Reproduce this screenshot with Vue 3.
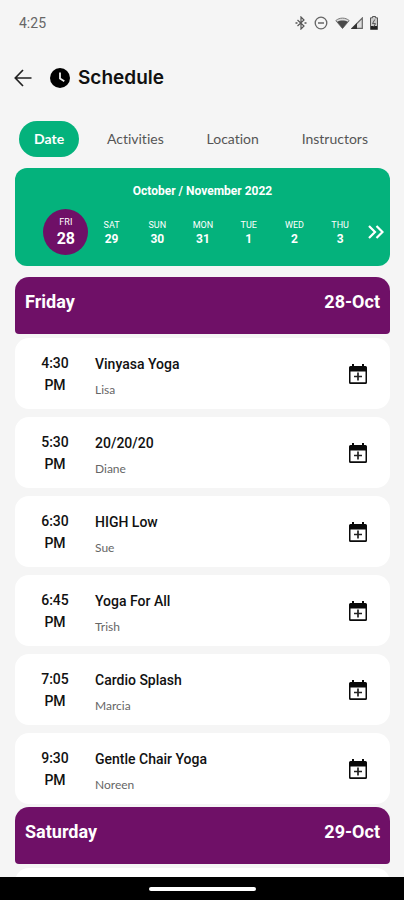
<script setup>
import { ref } from 'vue'

const tabs = ['Date', 'Activities', 'Location', 'Instructors']
const activeTab = ref('Date')

const days = [
  { name: 'FRI', date: 28 },
  { name: 'SAT', date: 29 },
  { name: 'SUN', date: 30 },
  { name: 'MON', date: 31 },
  { name: 'TUE', date: 1 },
  { name: 'WED', date: 2 },
  { name: 'THU', date: 3 }
]
const activeDay = ref(28)

const classes = [
  { time: '4:30', title: 'Vinyasa Yoga', instructor: 'Lisa' },
  { time: '5:30', title: '20/20/20', instructor: 'Diane' },
  { time: '6:30', title: 'HIGH Low', instructor: 'Sue' },
  { time: '6:45', title: 'Yoga For All', instructor: 'Trish' },
  { time: '7:05', title: 'Cardio Splash', instructor: 'Marcia' },
  { time: '9:30', title: 'Gentle Chair Yoga', instructor: 'Noreen' }
]
</script>

<template>
  <div class="screen">
    <div class="status">
      <span>4:25</span>
      <div class="status-icons">
        <svg width="12" height="14" viewBox="0 0 12 14" fill="none" stroke="#555" stroke-width="1.2">
          <path d="M2.500 4 9 10 6 13V1l3 3-6.500 6" />
          <path d="M0.500 7h2M9.500 7h2" stroke-width="1.600" />
        </svg>
        <svg width="14" height="14" viewBox="0 0 14 14" fill="none" stroke="#666" stroke-width="1.3">
          <circle cx="7" cy="7" r="5.800" />
          <path d="M4 7h6" stroke-width="1.500" />
        </svg>
        <svg width="15" height="12" viewBox="0 0 15 12">
          <path d="M.8 3.600C4.600.3 10.400.3 14.200 3.600L7.500 11.500z" fill="#ddd" stroke="#777" stroke-width="1" />
          <path d="M2 4.700c3.200-1.700 7.800-1.700 11 0l-5.500 6.700z" fill="#4a4a4a" />
        </svg>
        <svg class="signal" width="12" height="12" viewBox="0 0 12 12">
          <path d="M11.300 1v10.300H1z" fill="#ddd" stroke="#666" stroke-width="1.200" />
          <path d="M0 12 6 6v6z" fill="#333" />
        </svg>
        <svg width="8" height="14" viewBox="0 0 8 14">
          <path d="M2.500.5h3v1.300H7.500v11.700H.5V1.800h2z" fill="#ccc" stroke="#555" stroke-width="1" />
          <path d="M1 10h6v3H1z" fill="#222" />
          <path d="M4.800 3.500 2.500 7.600h3L3.600 11" fill="none" stroke="#555" stroke-width="1" />
        </svg>
      </div>
    </div>

    <header class="header">
      <button class="back" aria-label="Back">
        <svg width="18" height="18" viewBox="0 0 18 18" fill="none" stroke="#222" stroke-width="1.700">
          <path d="M17.500 9H1.500M9 1 1.300 9 9 17" />
        </svg>
      </button>
      <svg width="20" height="20" viewBox="0 0 20 20">
        <circle cx="10" cy="10" r="10" fill="#000" />
        <path d="M10 4.500v6l4.300 2.800" fill="none" stroke="#eee" stroke-width="1.800" />
      </svg>
      <h1>Schedule</h1>
    </header>

    <nav class="tabs">
      <button
        v-for="tab in tabs"
        :key="tab"
        class="tab"
        :class="{ active: tab === activeTab }"
        @click="activeTab = tab"
      >{{ tab }}</button>
    </nav>

    <section class="calendar">
      <h2>October / November 2022</h2>
      <div class="week">
        <div class="days">
          <button
            v-for="day in days"
            :key="day.date"
            class="day"
            :class="{ active: day.date === activeDay }"
            @click="activeDay = day.date"
          >
            <span class="day-name">{{ day.name }}</span>
            <span class="day-date">{{ day.date }}</span>
          </button>
        </div>
        <button class="next" aria-label="Next week">
          <svg width="16" height="14" viewBox="0 0 16 14" fill="none" stroke="#fff" stroke-width="2.200">
            <path d="M1 1l6 6-6 6M8.500 1l6 6-6 6" />
          </svg>
        </button>
      </div>
    </section>

    <main class="list">
      <h3 class="day-header"><span>Friday</span><span>28-Oct</span></h3>
      <ul class="classes">
        <li v-for="item in classes" :key="item.time" class="card">
          <div class="time"><span>{{ item.time }}</span><span>PM</span></div>
          <div class="info">
            <span class="title">{{ item.title }}</span>
            <span class="instructor">{{ item.instructor }}</span>
          </div>
          <button class="add" aria-label="Add to calendar">
            <svg width="18" height="20" viewBox="0 0 18 20">
              <path d="M1.500 2H3V0h2v2h8V0h2v2h1.500A1.500 1.500 0 0 1 18 3.500v15a1.500 1.500 0 0 1-1.500 1.500h-15A1.500 1.500 0 0 1 0 18.500v-15A1.500 1.500 0 0 1 1.500 2zM1.500 7.500v10.800h15V7.500z" fill="#0a0a0a" fill-rule="evenodd" />
              <path d="M9 8.500v8M5 12.500h8" stroke="#222" stroke-width="1.700" />
            </svg>
          </button>
        </li>
      </ul>
      <h3 class="day-header"><span>Saturday</span><span>29-Oct</span></h3>
      <div class="card"></div>
    </main>

    <div class="system-bar"><div class="handle"></div></div>
  </div>
</template>

<style>
body {
  margin: 0;
  background: #f5f5f5;
}
</style>

<style scoped>
.screen {
  display: flex;
  flex-direction: column;
  height: 100vh;
  background: #f5f5f5;
  color: #111;
  font-family: Roboto, sans-serif;
}
button {
  border: 0;
  padding: 0;
  background: none;
  color: inherit;
  font: inherit;
  cursor: pointer;
}
h1, h2, h3, ul {
  margin: 0;
  padding: 0;
  list-style: none;
}
svg {
  display: block;
  flex: none;
}
.status {
  display: flex;
  flex: none;
  align-items: center;
  justify-content: space-between;
  height: 46px;
  padding: 0 26px 0 19px;
  color: #666;
  font-size: 14px;
}
.status-icons {
  display: flex;
  align-items: center;
  gap: 7px;
}
.signal {
  margin-left: -6px;
}
.header {
  display: flex;
  flex: none;
  align-items: center;
  height: 64px;
  padding: 0 14px;
}
.back {
  margin-right: 18px;
}
.header h1 {
  margin-left: 8px;
  font: 600 19px/24px Inter, sans-serif;
}
.tabs {
  display: flex;
  flex: none;
  justify-content: space-between;
  padding: 11px 21px 11px 19px;
}
.tab {
  height: 36px;
  padding: 0 15px;
  border-radius: 18px;
  color: #555;
  font: 400 14px/36px Lato, sans-serif;
  font-variant-ligatures: none;
}
.tab.active {
  background: #04b27c;
  color: #fff;
  font-weight: 700;
}
.calendar {
  flex: none;
  margin: 0 14px 11px 15px;
  padding: 15px 6px 11px 28px;
  border-radius: 12px;
  background: #04b27c;
  color: #fff;
}
.calendar h2 {
  padding-right: 22px;
  font-size: 12px;
  font-weight: 700;
  line-height: 16px;
  text-align: center;
}
.week {
  display: flex;
  align-items: center;
  gap: 5px;
  padding-top: 10px;
}
.days {
  display: grid;
  flex: 1;
  grid-template-columns: repeat(7, 1fr);
}
.day {
  display: flex;
  flex-direction: column;
  align-items: center;
  justify-content: center;
  justify-self: center;
  width: 45px;
  height: 46px;
  border-radius: 50%;
}
.day-name {
  font-size: 9px;
  line-height: 14px;
}
.day-date {
  font-size: 12px;
  font-weight: 700;
  line-height: 14px;
}
.day.active {
  background: #6f1067;
}
.active .day-date {
  font-size: 16px;
  line-height: 20px;
}
.list {
  flex: 1;
  min-height: 0;
  padding: 0 14px 0 15px;
  overflow-y: auto;
  scrollbar-width: none;
}
.day-header {
  display: flex;
  justify-content: space-between;
  box-sizing: border-box;
  height: 57px;
  margin-bottom: 4px;
  padding: 13px 10px;
  border-radius: 14px 14px 4px 4px;
  background: #6f1067;
  color: #fff;
  font-size: 18px;
  font-weight: 700;
  line-height: 24px;
}
.classes {
  display: flex;
  flex-direction: column;
  gap: 8px;
  margin-bottom: 3px;
}
.card {
  display: flex;
  box-sizing: border-box;
  height: 71px;
  padding: 14px 23px 0 20px;
  border-radius: 14px;
  background: #fff;
}
.time {
  display: flex;
  flex-direction: column;
  width: 40px;
  font-size: 14px;
  font-weight: 500;
  line-height: 22px;
  text-align: center;
}
.info {
  display: flex;
  flex: 1;
  flex-direction: column;
  gap: 4px;
  padding-left: 20px;
}
.title {
  font-size: 14px;
  font-weight: 500;
  line-height: 24px;
}
.instructor {
  color: #666;
  font: 400 12px/20px Lato, sans-serif;
}
.add {
  align-self: flex-start;
  padding-top: 12px;
}
.system-bar {
  display: flex;
  flex: none;
  align-items: center;
  justify-content: center;
  height: 23px;
  background: #000;
}
.handle {
  width: 107px;
  height: 4px;
  border-radius: 2px;
  background: #fff;
}
</style>
